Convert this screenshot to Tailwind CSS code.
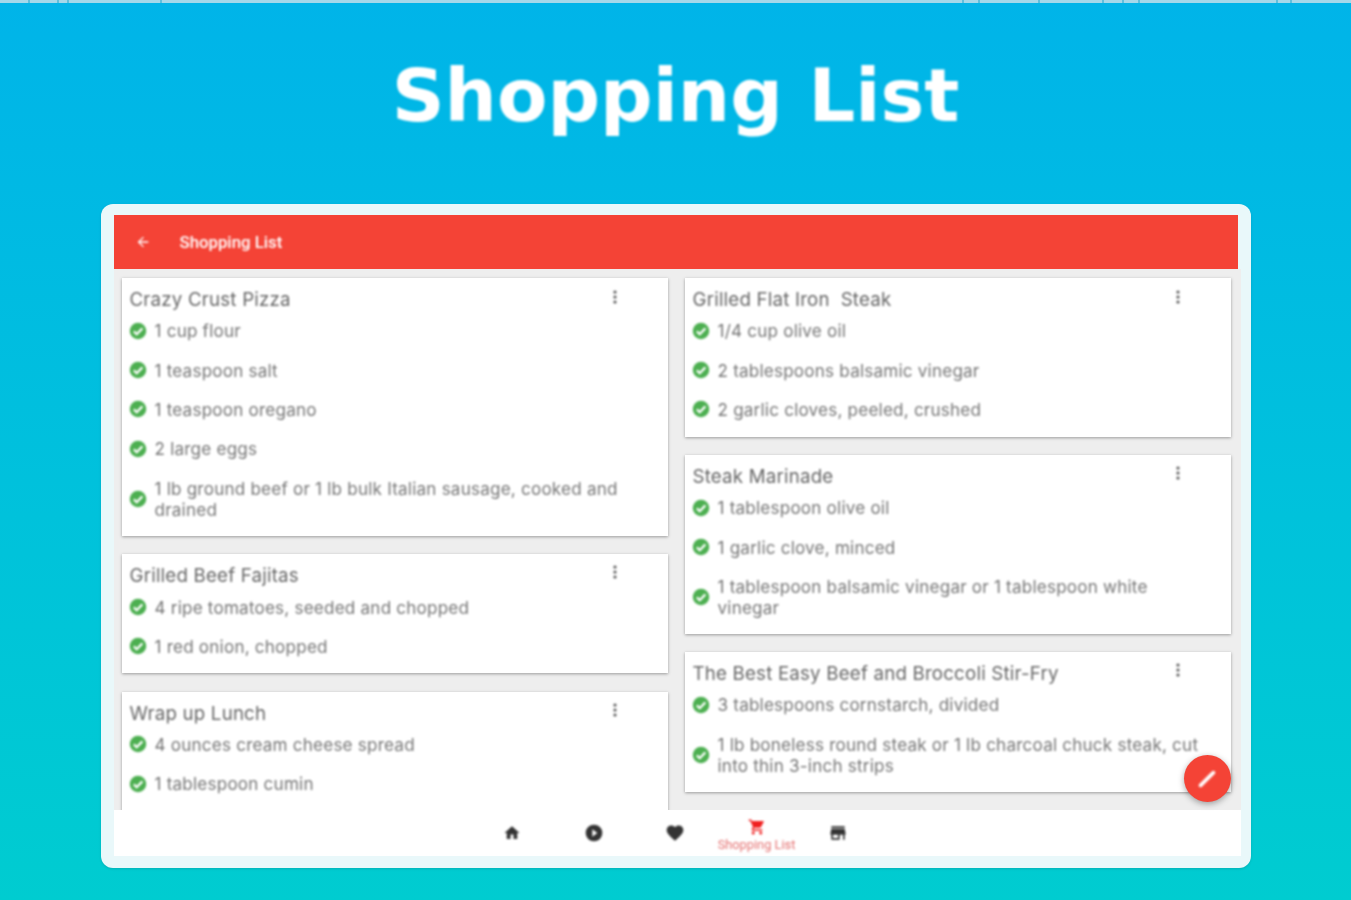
<!DOCTYPE html>
<html lang="en">
<head>
<meta charset="utf-8">
<title>Shopping List</title>
<script src="https://cdn.jsdelivr.net/npm/@tailwindcss/browser@4"></script>
</head>
<body class="m-0">
<div class="relative w-[1351px] h-[900px] overflow-hidden bg-gradient-to-b from-[#00b4e9] to-[#00ccd0] flex flex-col items-center font-['Lato',sans-serif]">
  <svg class="absolute top-0 left-0 w-[1351px] h-[3px]" viewBox="0 0 1351 3"><rect width="1351" height="3" fill="#a5d8ea"/><g fill="#5fbfdd"><rect x="28" width="2" height="3"/><rect x="57" width="2" height="3"/><rect x="67" width="2" height="3"/><rect x="160" width="2" height="3"/><rect x="962" width="2" height="3"/><rect x="978" width="2" height="3"/><rect x="1038" width="2" height="3"/><rect x="1102" width="2" height="3"/><rect x="1122" width="2" height="3"/><rect x="1138" width="2" height="3"/><rect x="1276" width="2" height="3"/><rect x="1290" width="2" height="3"/></g></svg>

  <h1 class="h-[204px] pt-[48px] text-white font-bold text-[73.5px] leading-[96px] font-['DejaVu_Sans',sans-serif] blur-[0.8px]">Shopping List</h1>

  <div class="relative w-[1150px] h-[664px] rounded-[12px] bg-[#e9f8fa] pl-[13px] pr-[10px] pt-[11px] pb-[12px] shadow-sm">
    <div class="flex flex-col h-full overflow-hidden">
      <header class="h-[54px] w-[1124px] shrink-0 bg-[#f44336] flex items-center text-white">
        <svg class="ml-[21px] w-[16px] h-[16px] blur-[0.8px]" viewBox="0 0 24 24" fill="white"><path d="M20 11H7.83l5.59-5.59L12 4l-8 8 8 8 1.41-1.41L7.83 13H20v-2z"/></svg>
        <span class="ml-[29px] pt-[1px] text-[16.8px] font-medium font-['Roboto',sans-serif] blur-[0.8px]">Shopping List</span>
      </header>

      <main class="flex-1 min-h-0 w-[1127px] bg-[#eeeeee] flex gap-[17px] pl-[8px] pt-[9px] overflow-hidden text-[#757575] font-['Inter',sans-serif] text-[17.1px] tracking-[0.2px]">
        <section class="w-[546px] flex flex-col gap-[18.5px] shrink-0">
          <article class="bg-white shadow-[0_1px_3px_rgba(0,0,0,0.35)] pl-[7px] pb-[7px]">
            <div class="h-[33px] flex justify-between items-start pr-[50px] pl-[1px] pt-[9px]"><h2 class="text-[18.7px] leading-[25px] text-[#666] blur-[0.8px]">Crazy Crust Pizza</h2><svg class="w-[6px] h-[16px] mt-[2px] blur-[0.8px]" viewBox="0 0 6 16" fill="#555"><circle cx="3" cy="3" r="1.6"/><circle cx="3" cy="8" r="1.6"/><circle cx="3" cy="13" r="1.6"/></svg></div>
            <ul class="pr-[25px]">
              <li class="flex items-center gap-[8px] py-[9.2px] leading-[21px]"><svg class="w-[18px] h-[18px] shrink-0 blur-[0.8px]" viewBox="0 0 24 24"><circle cx="12" cy="12" r="11" fill="#4caf50"/><path d="M6.5 12.5l3.8 3.8 7.5-7.8" stroke="#fff" stroke-width="3" fill="none"/></svg><span class="blur-[0.8px]">1 cup flour</span></li>
              <li class="flex items-center gap-[8px] py-[9.2px] leading-[21px]"><svg class="w-[18px] h-[18px] shrink-0 blur-[0.8px]" viewBox="0 0 24 24"><circle cx="12" cy="12" r="11" fill="#4caf50"/><path d="M6.5 12.5l3.8 3.8 7.5-7.8" stroke="#fff" stroke-width="3" fill="none"/></svg><span class="blur-[0.8px]">1 teaspoon salt</span></li>
              <li class="flex items-center gap-[8px] py-[9.2px] leading-[21px]"><svg class="w-[18px] h-[18px] shrink-0 blur-[0.8px]" viewBox="0 0 24 24"><circle cx="12" cy="12" r="11" fill="#4caf50"/><path d="M6.5 12.5l3.8 3.8 7.5-7.8" stroke="#fff" stroke-width="3" fill="none"/></svg><span class="blur-[0.8px]">1 teaspoon oregano</span></li>
              <li class="flex items-center gap-[8px] py-[9.2px] leading-[21px]"><svg class="w-[18px] h-[18px] shrink-0 blur-[0.8px]" viewBox="0 0 24 24"><circle cx="12" cy="12" r="11" fill="#4caf50"/><path d="M6.5 12.5l3.8 3.8 7.5-7.8" stroke="#fff" stroke-width="3" fill="none"/></svg><span class="blur-[0.8px]">2 large eggs</span></li>
              <li class="flex items-center gap-[8px] py-[9.2px] leading-[21px]"><svg class="w-[18px] h-[18px] shrink-0 blur-[0.8px]" viewBox="0 0 24 24"><circle cx="12" cy="12" r="11" fill="#4caf50"/><path d="M6.5 12.5l3.8 3.8 7.5-7.8" stroke="#fff" stroke-width="3" fill="none"/></svg><span class="blur-[0.8px] max-w-[475px]">1 lb ground beef or 1 lb bulk Italian sausage, cooked and drained</span></li>
            </ul>
          </article>
          <article class="bg-white shadow-[0_1px_3px_rgba(0,0,0,0.35)] pl-[7px] pb-[7px]">
            <div class="h-[33px] flex justify-between items-start pr-[50px] pl-[1px] pt-[9px]"><h2 class="text-[18.7px] leading-[25px] text-[#666] blur-[0.8px]">Grilled Beef Fajitas</h2><svg class="w-[6px] h-[16px] mt-[1px] blur-[0.8px]" viewBox="0 0 6 16" fill="#555"><circle cx="3" cy="3" r="1.6"/><circle cx="3" cy="8" r="1.6"/><circle cx="3" cy="13" r="1.6"/></svg></div>
            <ul class="pr-[25px]">
              <li class="flex items-center gap-[8px] py-[9.2px] leading-[21px]"><svg class="w-[18px] h-[18px] shrink-0 blur-[0.8px]" viewBox="0 0 24 24"><circle cx="12" cy="12" r="11" fill="#4caf50"/><path d="M6.5 12.5l3.8 3.8 7.5-7.8" stroke="#fff" stroke-width="3" fill="none"/></svg><span class="blur-[0.8px]">4 ripe tomatoes, seeded and chopped</span></li>
              <li class="flex items-center gap-[8px] py-[9.2px] leading-[21px]"><svg class="w-[18px] h-[18px] shrink-0 blur-[0.8px]" viewBox="0 0 24 24"><circle cx="12" cy="12" r="11" fill="#4caf50"/><path d="M6.5 12.5l3.8 3.8 7.5-7.8" stroke="#fff" stroke-width="3" fill="none"/></svg><span class="blur-[0.8px]">1 red onion, chopped</span></li>
            </ul>
          </article>
          <article class="bg-white shadow-[0_1px_3px_rgba(0,0,0,0.35)] pl-[7px] pb-[40px]">
            <div class="h-[33px] flex justify-between items-start pr-[50px] pl-[1px] pt-[9px]"><h2 class="text-[18.7px] leading-[25px] text-[#666] blur-[0.8px]">Wrap up Lunch</h2><svg class="w-[6px] h-[16px] mt-[1px] blur-[0.8px]" viewBox="0 0 6 16" fill="#555"><circle cx="3" cy="3" r="1.6"/><circle cx="3" cy="8" r="1.6"/><circle cx="3" cy="13" r="1.6"/></svg></div>
            <ul class="pr-[25px]">
              <li class="flex items-center gap-[8px] py-[9.2px] leading-[21px]"><svg class="w-[18px] h-[18px] shrink-0 blur-[0.8px]" viewBox="0 0 24 24"><circle cx="12" cy="12" r="11" fill="#4caf50"/><path d="M6.5 12.5l3.8 3.8 7.5-7.8" stroke="#fff" stroke-width="3" fill="none"/></svg><span class="blur-[0.8px]">4 ounces cream cheese spread</span></li>
              <li class="flex items-center gap-[8px] py-[9.2px] leading-[21px]"><svg class="w-[18px] h-[18px] shrink-0 blur-[0.8px]" viewBox="0 0 24 24"><circle cx="12" cy="12" r="11" fill="#4caf50"/><path d="M6.5 12.5l3.8 3.8 7.5-7.8" stroke="#fff" stroke-width="3" fill="none"/></svg><span class="blur-[0.8px]">1 tablespoon cumin</span></li>
            </ul>
          </article>
        </section>

        <section class="w-[546px] flex flex-col gap-[18px] shrink-0">
          <article class="bg-white shadow-[0_1px_3px_rgba(0,0,0,0.35)] pl-[7px] pb-[8px]">
            <div class="h-[33px] flex justify-between items-start pr-[50px] pl-[1px] pt-[9px]"><h2 class="text-[18.7px] leading-[25px] text-[#666] blur-[0.8px] whitespace-pre">Grilled Flat Iron  Steak</h2><svg class="w-[6px] h-[16px] mt-[2px] blur-[0.8px]" viewBox="0 0 6 16" fill="#555"><circle cx="3" cy="3" r="1.6"/><circle cx="3" cy="8" r="1.6"/><circle cx="3" cy="13" r="1.6"/></svg></div>
            <ul class="pr-[25px]">
              <li class="flex items-center gap-[8px] py-[9.2px] leading-[21px]"><svg class="w-[18px] h-[18px] shrink-0 blur-[0.8px]" viewBox="0 0 24 24"><circle cx="12" cy="12" r="11" fill="#4caf50"/><path d="M6.5 12.5l3.8 3.8 7.5-7.8" stroke="#fff" stroke-width="3" fill="none"/></svg><span class="blur-[0.8px]">1/4 cup olive oil</span></li>
              <li class="flex items-center gap-[8px] py-[9.2px] leading-[21px]"><svg class="w-[18px] h-[18px] shrink-0 blur-[0.8px]" viewBox="0 0 24 24"><circle cx="12" cy="12" r="11" fill="#4caf50"/><path d="M6.5 12.5l3.8 3.8 7.5-7.8" stroke="#fff" stroke-width="3" fill="none"/></svg><span class="blur-[0.8px]">2 tablespoons balsamic vinegar</span></li>
              <li class="flex items-center gap-[8px] py-[9.2px] leading-[21px]"><svg class="w-[18px] h-[18px] shrink-0 blur-[0.8px]" viewBox="0 0 24 24"><circle cx="12" cy="12" r="11" fill="#4caf50"/><path d="M6.5 12.5l3.8 3.8 7.5-7.8" stroke="#fff" stroke-width="3" fill="none"/></svg><span class="blur-[0.8px]">2 garlic cloves, peeled, crushed</span></li>
            </ul>
          </article>
          <article class="bg-white shadow-[0_1px_3px_rgba(0,0,0,0.35)] pl-[7px] pb-[7px]">
            <div class="h-[33px] flex justify-between items-start pr-[50px] pl-[1px] pt-[9px]"><h2 class="text-[18.7px] leading-[25px] text-[#666] blur-[0.8px]">Steak Marinade</h2><svg class="w-[6px] h-[16px] mt-[1px] blur-[0.8px]" viewBox="0 0 6 16" fill="#555"><circle cx="3" cy="3" r="1.6"/><circle cx="3" cy="8" r="1.6"/><circle cx="3" cy="13" r="1.6"/></svg></div>
            <ul class="pr-[25px]">
              <li class="flex items-center gap-[8px] py-[9.2px] leading-[21px]"><svg class="w-[18px] h-[18px] shrink-0 blur-[0.8px]" viewBox="0 0 24 24"><circle cx="12" cy="12" r="11" fill="#4caf50"/><path d="M6.5 12.5l3.8 3.8 7.5-7.8" stroke="#fff" stroke-width="3" fill="none"/></svg><span class="blur-[0.8px]">1 tablespoon olive oil</span></li>
              <li class="flex items-center gap-[8px] py-[9.2px] leading-[21px]"><svg class="w-[18px] h-[18px] shrink-0 blur-[0.8px]" viewBox="0 0 24 24"><circle cx="12" cy="12" r="11" fill="#4caf50"/><path d="M6.5 12.5l3.8 3.8 7.5-7.8" stroke="#fff" stroke-width="3" fill="none"/></svg><span class="blur-[0.8px]">1 garlic clove, minced</span></li>
              <li class="flex items-center gap-[8px] py-[9.2px] leading-[21px]"><svg class="w-[18px] h-[18px] shrink-0 blur-[0.8px]" viewBox="0 0 24 24"><circle cx="12" cy="12" r="11" fill="#4caf50"/><path d="M6.5 12.5l3.8 3.8 7.5-7.8" stroke="#fff" stroke-width="3" fill="none"/></svg><span class="blur-[0.8px]">1 tablespoon balsamic vinegar or 1 tablespoon white vinegar</span></li>
            </ul>
          </article>
          <article class="bg-white shadow-[0_1px_3px_rgba(0,0,0,0.35)] pl-[7px] pb-[7px]">
            <div class="h-[33px] flex justify-between items-start pr-[50px] pl-[1px] pt-[9px]"><h2 class="text-[18.7px] leading-[25px] text-[#666] blur-[0.8px]">The Best Easy Beef and Broccoli Stir-Fry</h2><svg class="w-[6px] h-[16px] mt-[1px] blur-[0.8px]" viewBox="0 0 6 16" fill="#555"><circle cx="3" cy="3" r="1.6"/><circle cx="3" cy="8" r="1.6"/><circle cx="3" cy="13" r="1.6"/></svg></div>
            <ul class="pr-[25px]">
              <li class="flex items-center gap-[8px] py-[9.2px] leading-[21px]"><svg class="w-[18px] h-[18px] shrink-0 blur-[0.8px]" viewBox="0 0 24 24"><circle cx="12" cy="12" r="11" fill="#4caf50"/><path d="M6.5 12.5l3.8 3.8 7.5-7.8" stroke="#fff" stroke-width="3" fill="none"/></svg><span class="blur-[0.8px]">3 tablespoons cornstarch, divided</span></li>
              <li class="flex items-center gap-[8px] py-[9.2px] leading-[21px]"><svg class="w-[18px] h-[18px] shrink-0 blur-[0.8px]" viewBox="0 0 24 24"><circle cx="12" cy="12" r="11" fill="#4caf50"/><path d="M6.5 12.5l3.8 3.8 7.5-7.8" stroke="#fff" stroke-width="3" fill="none"/></svg><span class="blur-[0.8px]">1 lb boneless round steak or 1 lb charcoal chuck steak, cut into thin 3-inch strips</span></li>
            </ul>
          </article>
        </section>
      </main>

      <nav class="h-[46px] w-[1127px] shrink-0 bg-white flex justify-center items-center pr-[4px]">
        <div class="w-[81.5px] flex justify-center"><svg class="w-[18px] h-[18px] blur-[0.8px]" viewBox="0 0 24 24" fill="#333"><path d="M10 20v-6h4v6h5v-8h3L12 3 2 12h3v8z"/></svg></div>
        <div class="w-[81.5px] flex justify-center"><svg class="w-[20px] h-[20px] blur-[0.8px]" viewBox="0 0 24 24" fill="#333"><path d="M12 2a10 10 0 1 0 0 20 10 10 0 0 0 0-20zm-2 14.5v-9l6 4.5-6 4.5z"/></svg></div>
        <div class="w-[81.5px] flex justify-center"><svg class="w-[20px] h-[20px] blur-[0.8px]" viewBox="0 0 24 24" fill="#333"><path d="M12 21.35l-1.45-1.32C5.4 15.36 2 12.28 2 8.5 2 5.42 4.42 3 7.5 3c1.74 0 3.41.81 4.5 2.09C13.09 3.81 14.76 3 16.5 3 19.58 3 22 5.42 22 8.5c0 3.78-3.4 6.86-8.55 11.54L12 21.35z"/></svg></div>
        <div class="w-[81.5px] flex flex-col items-center pt-[4px] text-[#e57373] font-['Roboto',sans-serif]">
          <svg class="w-[20px] h-[18px] -mt-[1px] blur-[0.8px]" viewBox="0 0 24 24" fill="#f01f1f"><path d="M7 18c-1.1 0-1.99.9-1.99 2S5.9 22 7 22s2-.9 2-2-.9-2-2-2zM1 2v2h2l3.6 7.59-1.35 2.45c-.16.28-.25.61-.25.96 0 1.1.9 2 2 2h12v-2H7.42c-.14 0-.25-.11-.25-.25l.03-.12.9-1.63h7.45c.75 0 1.41-.41 1.75-1.03l3.58-6.49A1 1 0 0 0 20 4H5.21l-.94-2H1zm16 16c-1.1 0-1.99.9-1.99 2s.89 2 1.99 2 2-.9 2-2-.9-2-2-2z"/></svg>
          <span class="text-[12.8px] leading-[14px] mt-[2px] blur-[0.8px]">Shopping List</span>
        </div>
        <div class="w-[81.5px] flex justify-center"><svg class="w-[20px] h-[20px] blur-[0.8px]" viewBox="0 0 24 24" fill="#333"><path d="M20 4H4v2h16V4zm1 10v-2l-1-5H4l-1 5v2h1v6h10v-6h4v6h2v-6h1zm-9 4H6v-4h6v4z"/></svg></div>
      </nav>
    </div>
    <button class="absolute left-[1083px] top-[551px] w-[47px] h-[47px] rounded-full bg-[#f44336] flex items-center justify-center shadow-[0_2px_6px_rgba(0,0,0,0.35)]">
      <svg class="w-[22px] h-[22px] blur-[0.8px]" viewBox="0 0 24 24"><path d="M5 19L19 5" stroke="#fff" stroke-width="4" stroke-linecap="round"/></svg>
    </button>
  </div>
</div>
</body>
</html>
